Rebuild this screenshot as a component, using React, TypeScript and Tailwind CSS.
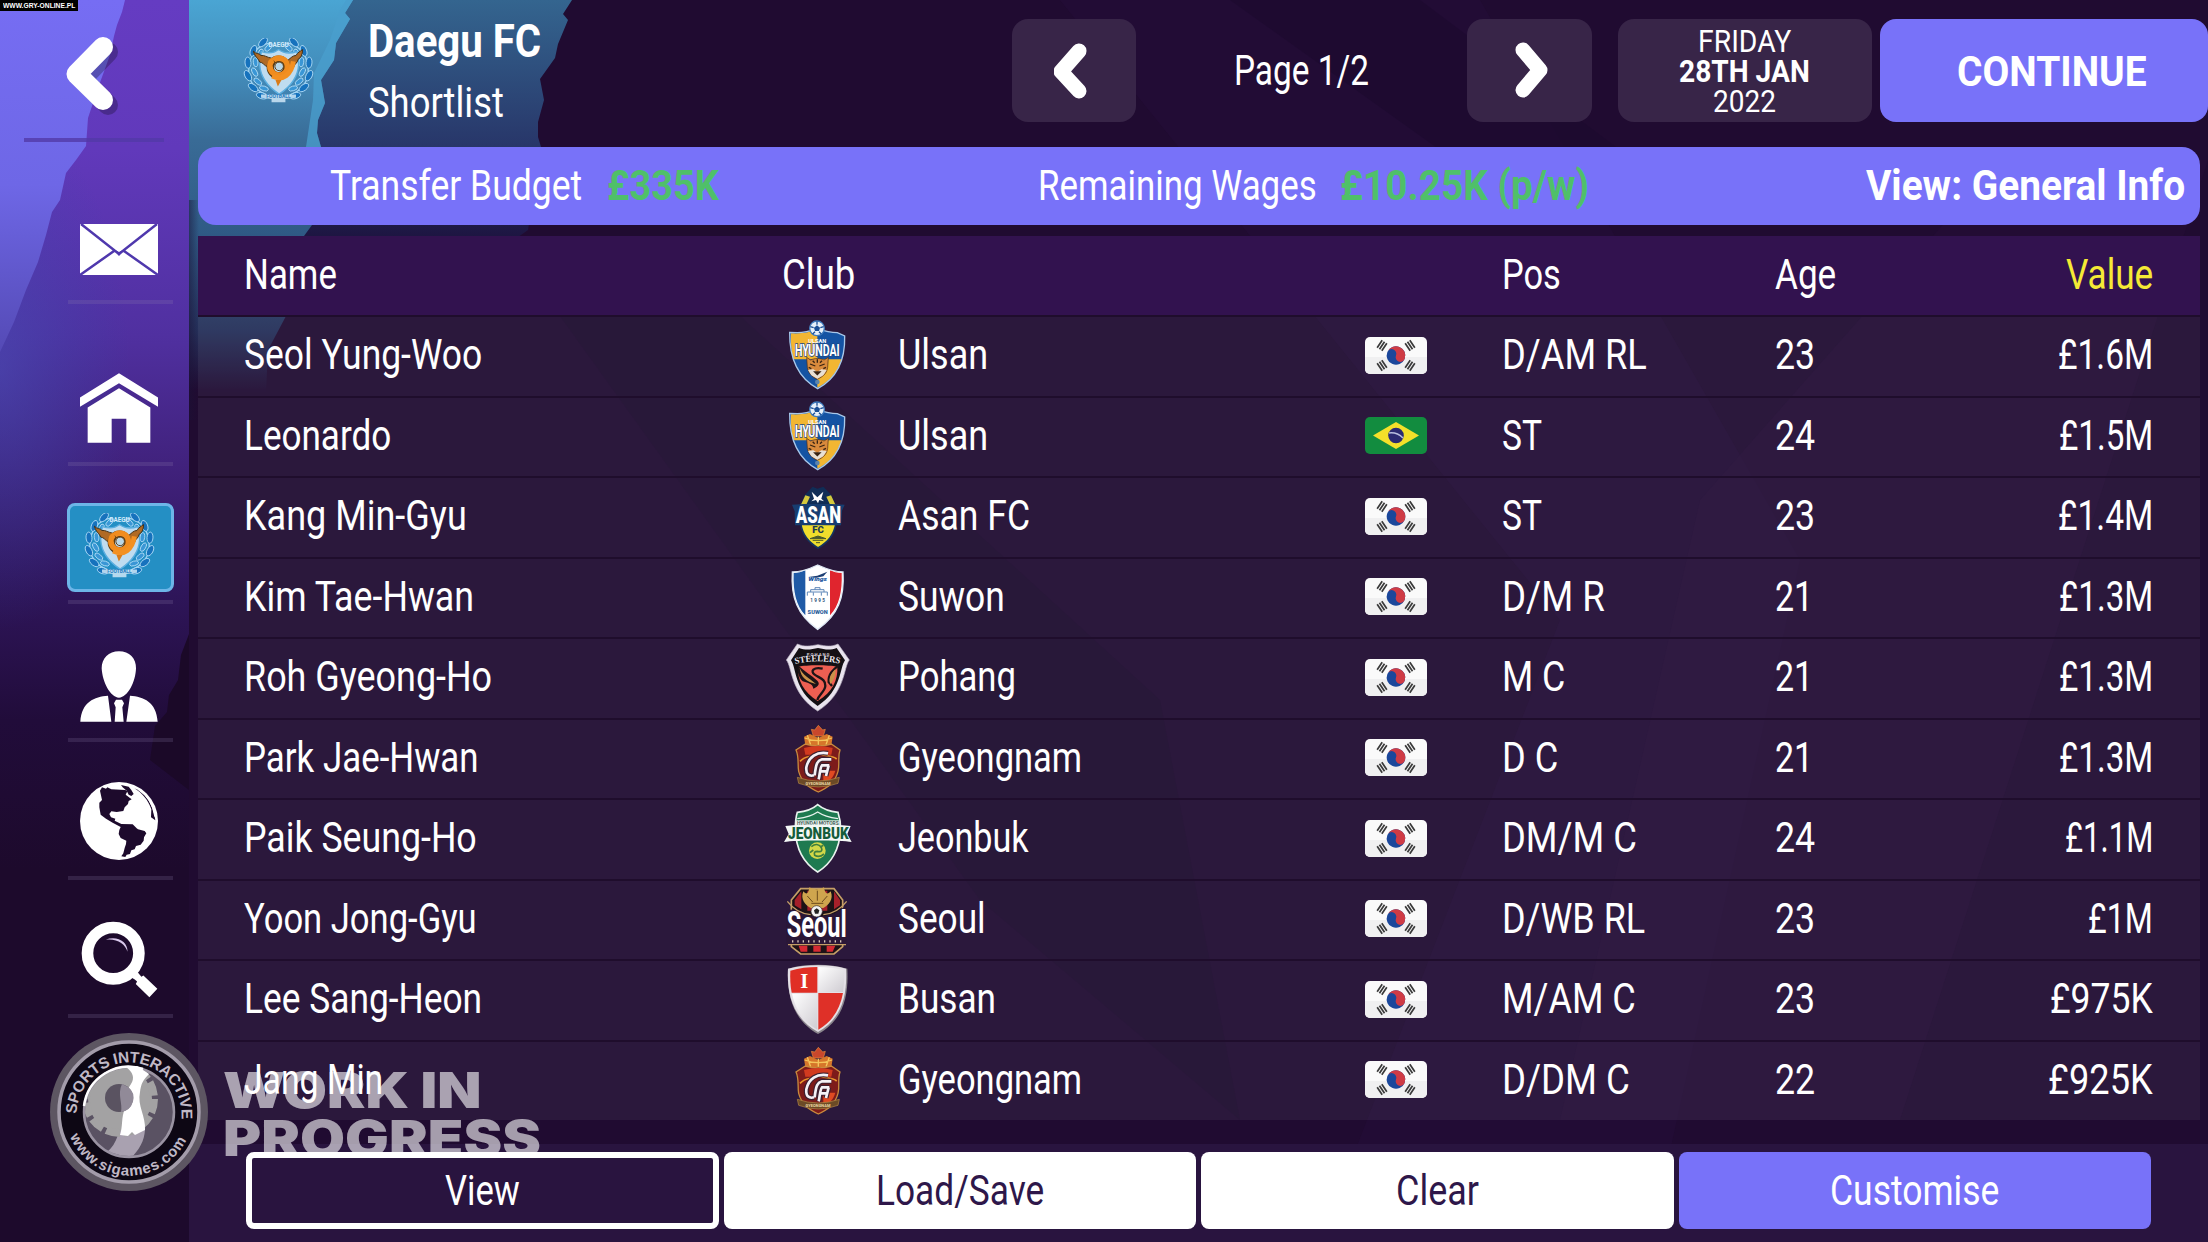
import { useLayoutEffect, useRef, useState } from "react";
import type { ReactNode } from "react";
import clsx from "clsx";

type Player = {
  name: [string, number];
  crest: keyof typeof crests;
  club: [string, number];
  flag: "kr" | "br";
  pos: [string, number];
  age: [string, number];
  value: [string, number];
};

// Squeezes a line of text to a given width, for the condensed look
const Fit = ({
  w,
  className,
  children,
}: {
  w: number;
  className?: string;
  children: ReactNode;
}) => {
  const ref = useRef<HTMLSpanElement>(null);
  const [scale, setScale] = useState(1);

  useLayoutEffect(() => {
    if (ref.current) setScale(w / ref.current.offsetWidth);
  }, [w, children]);

  return (
    <span className={clsx("inline-block whitespace-nowrap", className)} style={{ width: w }}>
      <span
        ref={ref}
        className="inline-block origin-left"
        style={{ transform: `scaleX(${scale})` }}
      >
        {children}
      </span>
    </span>
  );
};

const Backdrop = () => (
  <svg className="absolute inset-0" width="2208" height="1242" viewBox="0 0 2208 1242">
    <defs>
      <linearGradient id="side" x1="0" y1="0" x2="0" y2="1">
        <stop offset="0" stopColor="#653cc2" />
        <stop offset="0.12" stopColor="#6139bb" />
        <stop offset="0.27" stopColor="#5030a0" />
        <stop offset="0.38" stopColor="#40217b" />
        <stop offset="0.48" stopColor="#2e1559" />
        <stop offset="0.58" stopColor="#210c3a" />
        <stop offset="0.7" stopColor="#1d0a2c" />
        <stop offset="1" stopColor="#1d0a2c" />
      </linearGradient>
      <radialGradient id="sideFade">
        <stop offset="0" stopColor="#4652b8" stopOpacity="0.5" />
        <stop offset="1" stopColor="#3045a8" stopOpacity="0" />
      </radialGradient>
      <linearGradient id="sideFront" x1="0" y1="0" x2="0" y2="370" gradientUnits="userSpaceOnUse">
        <stop offset="0" stopColor="#766df3" />
        <stop offset="0.5" stopColor="#6e67e6" />
        <stop offset="1" stopColor="#5247b0" />
      </linearGradient>
      <linearGradient id="teal" x1="0" y1="0" x2="0" y2="390" gradientUnits="userSpaceOnUse">
        <stop offset="0" stopColor="#4aa5d3" />
        <stop offset="0.2" stopColor="#428ab8" />
        <stop offset="0.36" stopColor="#396b96" />
        <stop offset="0.6" stopColor="#2f5a85" />
        <stop offset="0.85" stopColor="#25305a" />
        <stop offset="1" stopColor="#200b32" />
      </linearGradient>
      <linearGradient id="slate" x1="0" y1="0" x2="0" y2="240" gradientUnits="userSpaceOnUse">
        <stop offset="0" stopColor="#34658f" />
        <stop offset="0.6" stopColor="#28376a" />
        <stop offset="1" stopColor="#1d1440" />
      </linearGradient>
      <linearGradient id="shade" x1="0" y1="0" x2="1" y2="0">
        <stop offset="0" stopColor="#1b1136" stopOpacity="0.5" />
        <stop offset="1" stopColor="#1b1136" stopOpacity="0" />
      </linearGradient>
    </defs>
    <rect width="2208" height="1242" fill="#200b31" />
    <polygon points="1060,0 1480,0 1800,560 1650,1242 1320,1242 1560,620" fill="#250d38" opacity="0.6" />
    <polygon points="1230,0 1420,0 1620,150 1440,150" fill="#1d0a2f" opacity="0.7" />
    <polygon points="560,316 740,316 1160,700 1240,1120 980,900" fill="#1b0b2a" opacity="0.35" />
    <polygon points="1700,500 2000,160 2208,160 1900,1120 1560,1120" fill="#250e38" opacity="0.5" />
    <polygon
      points="189,0 572,0 563,14 568,20 558,44 555,58 540,79 544,100 538,122 538,137 541,147 528,230 500,250 189,250"
      fill="url(#slate)"
    />
    <polygon
      points="189,0 353,0 345,13 350,19 336,43 334,60 321,80 325,103 318,120 317,133 321,147 312,225 304,236 286,316 268,350 266,392 189,392"
      fill="url(#teal)"
    />
    <polygon
      points="353,0 345,13 350,19 336,43 334,60 321,80 325,103 318,120 317,133 321,147 306,147 313,100 314,73 330,40 340,10 346,0"
      fill="#4a9fcd"
      opacity="0.75"
    />
    <rect x="189" y="200" width="10" height="220" fill="url(#shade)" />
    <rect width="189" height="1242" fill="url(#side)" />
    <ellipse cx="0" cy="370" rx="130" ry="260" fill="url(#sideFade)" />
    <polygon
      points="0,0 125,0 122,12 117,25 114,36 110,55 98,88 88,118 86,146 76,160 66,173 60,200 52,212 46,235 38,262 26,290 14,322 0,352"
      fill="url(#sideFront)"
    />
    <polygon points="189,634 181,655 178,680 169,695 167,712 155,726 150,760 189,790" fill="#1b0928" />
  </svg>
);

const DaeguCrest = () => (
  <svg width="73" height="66" viewBox="249 545 220 200">
    {[-1, 1].map((side) => (
      <g key={side} transform={`translate(359 640) scale(${side} 1)`}>
        <path
          d="M20-80C70-75 92-35 90 10C86 50 60 72 20 82"
          fill="none"
          stroke="#9fd4f5"
          strokeWidth="4"
        />
        {[-62, -38, -14, 10, 34, 56].map((a) => (
          <g key={a} transform={`rotate(${a}) translate(86 0) rotate(18)`} stroke="#b5dff8" strokeWidth="2.5">
            <ellipse cx="9" cy="0" rx="9" ry="17" fill="#1672bd" />
            <ellipse cx="-14" cy="0" rx="7" ry="14" fill="#3a96d5" />
          </g>
        ))}
      </g>
    ))}
    <path
      d="M359 580C375 592 398 592 415 586L420 625C418 665 392 695 361 715C330 695 304 665 302 625L307 586C324 592 344 592 359 580Z"
      fill="#bfdcf0"
      stroke="#5aaee0"
      strokeWidth="4"
    />
    <text x="359" y="573" textAnchor="middle" fontSize="19" className="fill-[#d6ecfa] font-['Roboto'] font-bold">
      DAEGU
    </text>
    <path d="M306 716H412V726L380 730V740H338V730L306 726Z" fill="#cfe6f6" opacity="0.85" />
    <text x="359" y="728" textAnchor="middle" fontSize="15" className="fill-[#2b80c2] font-['Roboto'] font-bold">
      FOOTBALL
    </text>
    <path
      d="M283 585C290 594 300 590 306 598C316 596 324 604 338 606L326 632C316 630 312 618 302 618C298 606 288 604 283 585ZM432 580C424 586 418 588 412 598C402 598 396 606 388 612L394 636L406 632C408 622 418 620 418 610C426 606 432 596 432 580Z"
      fill="#b06a24"
      stroke="#453116"
      strokeWidth="3"
    />
    <circle cx="359" cy="634" r="25" fill="none" stroke="#5a3a12" strokeWidth="22" />
    <path
      d="M344 612C360 600 386 608 386 632C386 654 362 664 344 652C328 640 330 616 344 612"
      fill="none"
      stroke="#f08c1e"
      strokeWidth="17"
    />
    <path
      d="M340 660C372 676 398 656 404 616"
      fill="none"
      stroke="#f39021"
      strokeWidth="15"
    />
    <circle cx="361" cy="631" r="13" fill="#b9d6e6" stroke="#5a3a12" strokeWidth="3" />
    <path d="M350 672L368 672L357 692Z" fill="#d97b18" />
  </svg>
);

const UlsanCrest = () => (
  <>
    <path
      d="M89 67L112 68C135 68 148 64 172 55C196 64 210 68 232 68L254 78C256 150 230 205 173 236C116 205 88 150 89 67Z"
      fill="#1453a3"
    />
    <path d="M93 70C130 72 150 66 172 58L172 148L99 148C94 125 92 100 93 70Z" fill="#f2b632" />
    <path d="M172 148L245 148C232 190 205 218 172 233Z" fill="#f2b632" />
    <path
      d="M89 67L112 68C135 68 148 64 172 55C196 64 210 68 232 68L254 78C256 150 230 205 173 236C116 205 88 150 89 67Z"
      fill="none"
      stroke="#a8c8ea"
      strokeWidth="4"
    />
    <circle cx="171" cy="55" r="22" fill="#e6f0fa" stroke="#3f7bbd" strokeWidth="4" />
    <path d="M171 46L180 53L177 63L165 63L162 53Z" fill="#1a4f96" />
    <path
      d="M171 34V44M151 50L161 53M158 72L165 65M184 72L177 65M191 50L181 53"
      stroke="#1a4f96"
      strokeWidth="4"
    />
    <text x="172" y="98" textAnchor="middle" fontSize="17" className="fill-white font-['Roboto'] font-bold">
      ULSAN
    </text>
    <text
      x="105"
      y="137"
      textLength="134"
      lengthAdjust="spacingAndGlyphs"
      fontSize="47"
      strokeWidth="5"
      paintOrder="stroke"
      className="fill-white stroke-[#1d4a87] font-['Roboto'] font-bold"
    >
      HYUNDAI
    </text>
    <path
      d="M140 142L152 150C165 144 180 144 192 150L205 142L203 172C200 192 188 200 172 208C156 200 146 192 142 172Z"
      fill="#d98a3c"
      stroke="#4a2b14"
      strokeWidth="2"
    />
    <path d="M144 180L160 178L172 186L184 178L200 180L190 196L172 206L154 196Z" fill="#e8e0d4" />
    <path
      d="M150 162L166 168M194 162L178 168M172 148V158M164 186H180L172 194ZM146 172L154 176M198 172L190 176M158 152L164 158M186 152L180 158"
      stroke="#3a2413"
      strokeWidth="4"
      fill="#3a2413"
    />
    <circle cx="172" cy="216" r="7" fill="#5b84ad" />
  </>
);

const AsanCrest = () => (
  <>
    <path d="M134 555L158 530L172 536L190 530L214 555L226 585L122 585Z" fill="#102d56" />
    <path
      d="M122 640H228C222 675 205 695 174 714C145 695 127 675 122 640Z"
      fill="#f0de2c"
      stroke="#143560"
      strokeWidth="5"
    />
    <path d="M136 556L150 560L138 586L122 586ZM213 556L199 560L211 586L227 586Z" fill="#d5c83c" />
    <path d="M155 545L172 562L190 545L184 566L192 574L178 570L174 580L168 570L154 574L162 566Z" fill="#fff" />
    <path d="M96 584L132 582H214L254 584L246 602L243 646H105L104 604Z" fill="#173d70" />
    <text
      x="107"
      y="640"
      textLength="136"
      lengthAdjust="spacingAndGlyphs"
      fontSize="71"
      className="fill-white font-['Roboto'] font-black"
    >
      ASAN
    </text>
    <text x="174" y="670" textAnchor="middle" fontSize="29" className="fill-[#1d3a52] font-['Roboto'] font-black">
      FC
    </text>
    <path d="M150 686L174 678L198 686ZM158 691H190M168 698H180" stroke="#4b5a2c" strokeWidth="3" fill="#4b5a2c" />
  </>
);

const SuwonCrest = () => (
  <>
    <path
      d="M97 785C125 785 150 775 173 764C198 775 222 785 249 785C254 860 235 915 173 957C112 915 92 860 97 785Z"
      fill="#fff"
    />
    <path d="M101 788C115 788 125 785 136 780V915C108 885 99 845 101 788Z" fill="#1f5aa6" />
    <path d="M245 788C231 788 221 785 210 780V915C238 885 247 845 245 788Z" fill="#e0252e" />
    <path
      d="M97 785C125 785 150 775 173 764C198 775 222 785 249 785C254 860 235 915 173 957C112 915 92 860 97 785Z"
      fill="none"
      stroke="#dfe9f5"
      strokeWidth="4"
    />
    <path d="M145 800L172 796L202 784L190 798L170 802Z" fill="#1c3e73" />
    <text
      x="145"
      y="812"
      textLength="56"
      lengthAdjust="spacingAndGlyphs"
      fontSize="18"
      className="fill-[#1b56a0] font-['Roboto'] font-black italic"
    >
      Wings
    </text>
    <path
      d="M142 856V845H202V856M152 845V838H192V845M165 838V832H180V838M160 856V846M184 856V846"
      stroke="#5d86b8"
      strokeWidth="3"
      fill="none"
    />
    <text x="175" y="874" textAnchor="middle" fontSize="14" className="fill-[#34557e] font-['Roboto'] font-bold tracking-[4px]">
      1995
    </text>
    <text x="173" y="912" textAnchor="middle" fontSize="17" className="fill-[#2f5f9c] font-['Roboto'] font-black">
      SUWON
    </text>
  </>
);

const PohangCrest = () => (
  <>
    <path
      d="M112 42C135 52 150 48 174 44C198 48 212 52 234 42L268 90C250 110 258 190 173 243C90 190 97 110 79 90Z"
      fill="#e9e4ee"
      stroke="#bdb5c4"
      strokeWidth="2"
    />
    <path
      d="M117 54C138 62 155 58 174 54C193 58 210 62 230 54L255 91C238 115 246 180 173 228C101 180 110 115 93 91Z"
      fill="#141014"
    />
    <path d="M114 110C140 104 205 104 232 110C234 150 218 185 173 213C130 185 112 150 114 110Z" fill="#ee5f52" />
    <path d="M114 106C132 124 152 134 172 152C184 164 168 172 160 176C158 160 140 158 128 154C116 142 110 124 114 106Z" fill="#1d1316" />
    <path
      d="M188 116C160 110 150 124 164 134C178 144 198 148 196 168C194 186 176 194 172 210M236 106C220 118 204 132 206 156L216 168"
      stroke="#1d1316"
      strokeWidth="7"
      fill="none"
    />
    <path
      d="M119 114C128 136 148 144 168 162C140 156 122 142 119 114ZM226 118C214 130 204 145 211 162C222 150 228 136 226 118Z"
      fill="#c99249"
    />
    <text x="176" y="79" textAnchor="middle" fontSize="13" className="fill-[#cfc9d2] font-['Roboto'] font-bold tracking-[3px]">
      POHANG
    </text>
    <path id="steel" d="M106 102Q174 86 242 102" fill="none" />
    <text fontSize="27" className="fill-[#eee9f0] font-['Liberation_Serif'] font-bold">
      <textPath href="#steel" textLength="134" lengthAdjust="spacingAndGlyphs">
        STEELERS
      </textPath>
    </text>
  </>
);

const GyeongnamCrest = () => (
  <>
    <path d="M175 284L188 298L196 296L190 316H160L154 296L164 298Z" fill="#c9472c" stroke="#e28a3a" strokeWidth="2" />
    <path d="M132 318L150 310L175 322L200 310L218 318L214 344H136Z" fill="#d6762a" />
    <path
      d="M134 322Q175 338 216 322M142 314L152 342M208 314L198 342M175 318V342"
      stroke="#f4c45a"
      strokeWidth="4"
      fill="none"
    />
    <path
      d="M136 340Q175 352 214 340L240 358C232 380 240 400 234 422C225 455 205 470 175 484C145 470 125 455 116 422C112 400 118 380 108 358Z"
      fill="#7d1b1a"
      stroke="#c9893d"
      strokeWidth="4"
    />
    <path d="M132 352Q175 340 218 352L214 372H136Z" fill="#d23a1f" />
    <path d="M120 392C140 370 150 384 175 368C200 380 215 372 230 385" stroke="#e9952c" strokeWidth="5" fill="none" />
    <path d="M190 420H226C220 442 205 455 190 458Z" fill="#e04a22" />
    <path
      d="M204 368C170 362 146 378 139 410C137 432 148 438 162 434M214 386H186C172 390 168 398 164 434M208 404H186C180 410 180 430 176 446M182 422H200M206 404L198 436"
      stroke="#3b2030"
      strokeWidth="15"
      fill="none"
    />
    <path
      d="M204 368C170 362 146 378 139 410C137 432 148 438 162 434M214 386H186C172 390 168 398 164 434M208 404H186C180 410 180 430 176 446M182 422H200M206 404L198 436"
      stroke="#f4f1f6"
      strokeWidth="8"
      fill="none"
    />
    <path d="M112 440Q175 462 238 440L234 458Q175 480 116 458Z" fill="#6b4a26" stroke="#b58a45" strokeWidth="2" />
    <text x="174" y="464" textAnchor="middle" fontSize="12" className="fill-[#f0dca8] font-['Roboto'] font-bold">
      GYEONGNAM
    </text>
  </>
);

const JeonbukCrest = () => (
  <>
    <path
      d="M173 524C192 540 212 545 234 547C240 565 242 580 242 600C238 660 215 700 173 726C132 700 108 660 106 600C106 580 106 565 112 547C135 545 155 540 173 524Z"
      fill="#1e7a50"
      stroke="#e9f3ee"
      strokeWidth="5"
    />
    <path
      d="M112 566C140 562 158 556 173 546C188 556 206 562 234 566"
      fill="none"
      stroke="#e9f3ee"
      strokeWidth="4"
    />
    <rect x="108" y="571" width="131" height="18" fill="#eef4f1" />
    <text
      x="111"
      y="585"
      textLength="125"
      lengthAdjust="spacingAndGlyphs"
      fontSize="15"
      className="fill-[#44605a] font-['Roboto'] font-bold"
    >
      HYUNDAI MOTORS
    </text>
    <path d="M72 636L86 612L76 588C140 582 208 582 272 588L262 612L275 636C240 630 108 630 72 636Z" fill="#f4f8f6" />
    <text
      x="84"
      y="627"
      textLength="182"
      lengthAdjust="spacingAndGlyphs"
      fontSize="51"
      className="fill-[#155c3b] font-['Roboto'] font-black"
    >
      JEONBUK
    </text>
    <circle cx="172" cy="662" r="25" fill="#d2d848" />
    <path
      d="M154 650Q172 636 184 652Q190 668 172 664Q160 664 164 676Q178 684 192 672M150 668L160 660M180 652L190 646"
      stroke="#3f7f3f"
      strokeWidth="5"
      fill="none"
    />
  </>
);

const SeoulCrest = () => (
  <>
    <path d="M122 54H222L248 88V228L222 250H122L94 228V88Z" fill="#1d1216" stroke="#c59f67" strokeWidth="5" />
    <path
      d="M104 88L124 62V116L104 104ZM142 60H160V120H142ZM184 60H202V120H184ZM222 62L240 88V104L222 116Z"
      fill="#a5202a"
    />
    <path
      d="M130 62C140 74 146 68 148 50C160 58 180 58 192 50C194 68 202 74 212 62C222 86 206 104 190 112H152C136 104 120 86 130 62Z"
      fill="#cfa54e"
    />
    <path d="M142 76L158 94M202 76L186 94M172 60V90M154 98H190" stroke="#6c4a1c" strokeWidth="3" />
    <path d="M80 118L112 116L150 136H192L224 128L260 104V220H80Z" fill="#2a1736" />
    <path d="M82 92Q110 128 152 132M260 92Q232 128 190 132" stroke="#c59f67" strokeWidth="4" fill="none" />
    <circle cx="170" cy="122" r="17" fill="#f4f4f4" stroke="#3a3030" strokeWidth="2" />
    <path d="M170 113L178 119L175 129H165L162 119Z" fill="#222" />
    <text
      x="80"
      y="200"
      textLength="180"
      lengthAdjust="spacingAndGlyphs"
      fontSize="108"
      className="fill-white font-['Roboto'] font-bold"
    >
      Seoul
    </text>
    <path d="M96 212H250" stroke="#d8c6b8" strokeWidth="7" strokeDasharray="4 12" />
    <path d="M84 222H258" stroke="#c59f67" strokeWidth="4" />
    <path d="M116 225H142V243H122ZM160 225H182V243H160ZM200 225H226L218 243H200Z" fill="#d52a33" />
  </>
);

const BusanCrest = () => (
  <>
    <defs>
      <linearGradient id="silver" x1="0" y1="0" x2="1" y2="1">
        <stop offset="0" stopColor="#fff" />
        <stop offset="1" stopColor="#cfccd2" />
      </linearGradient>
    </defs>
    <path
      d="M84 296C115 286 145 284 174 284C205 284 235 288 262 296C266 375 252 450 174 492C98 450 80 375 84 296Z"
      fill="#8b868d"
    />
    <path
      d="M84 296C115 288 145 286 174 286C203 286 232 288 258 296C262 372 248 445 174 486C100 445 80 375 84 296Z"
      fill="#e4e0e6"
    />
    <path d="M91 302C118 294 145 291 172 291V368H95C91 347 90 325 91 302Z" fill="#e02f25" />
    <path d="M175 291C203 291 228 294 252 300C253 325 252 347 249 366H175Z" fill="url(#silver)" />
    <path d="M96 371H172V479C130 456 106 418 96 371Z" fill="url(#silver)" />
    <path d="M175 369H249C240 418 216 456 175 479Z" fill="#df3028" />
    <text x="133" y="353" textAnchor="middle" fontSize="62" className="fill-white font-['Liberation_Serif'] font-bold">
      I
    </text>
  </>
);

// Every crest keeps its own drawing space, one table row high
const crests = {
  ulsan: { box: "66 15 216 240", art: <UlsanCrest /> },
  asan: { box: "66 498 216 240", art: <AsanCrest /> },
  suwon: { box: "66 740 216 240", art: <SuwonCrest /> },
  pohang: { box: "66 21 216 240", art: <PohangCrest /> },
  gyeongnam: { box: "66 262 216 240", art: <GyeongnamCrest /> },
  jeonbuk: { box: "66 504 216 240", art: <JeonbukCrest /> },
  seoul: { box: "66 25 216 240", art: <SeoulCrest /> },
  busan: { box: "66 267 216 240", art: <BusanCrest /> },
};

const Flag = ({ code }: { code: "kr" | "br" }) =>
  code === "br" ? (
    <svg width="62" height="37" viewBox="0 0 62 37" className="rounded-[5px]">
      <rect width="62" height="37" fill="#128c3f" />
      <polygon points="31,5 54,18.5 31,32 8,18.5" fill="#f3e02a" />
      <circle cx="31" cy="18.5" r="7.8" fill="#2b2a72" />
      <path d="M24 16Q32 15 38 21" stroke="#b9bfe0" strokeWidth="1.5" fill="none" />
    </svg>
  ) : (
    <svg width="62" height="37" viewBox="0 0 62 37" className="rounded-[5px]">
      <rect width="62" height="37" fill="#fafafa" />
      <rect y="20" width="62" height="17" fill="#f0f0f1" />
      <g transform="rotate(22 31 18.5)">
        <circle cx="31" cy="18.5" r="9.3" fill="#1b479b" />
        <path
          d="M21.7 18.5A9.3 9.3 0 0 1 40.3 18.5A4.65 4.65 0 0 1 31 18.5A4.65 4.65 0 0 0 21.7 18.5Z"
          fill="#cf3b45"
        />
      </g>
      {[
        [17, 8.5, -56],
        [45, 8.5, 56],
        [17, 28.5, 56],
        [45, 28.5, -56],
      ].map(([x, y, a]) => (
        <path
          key={`${x}-${y}`}
          transform={`translate(${x} ${y}) rotate(${a})`}
          d="M-4.5-2.8H4.5M-4.5 0H4.5M-4.5 2.8H4.5"
          stroke="#3a3a3a"
          strokeWidth="1.7"
        />
      ))}
    </svg>
  );

const players: Player[] = [
  { name: ["Seol Yung-Woo", 238], crest: "ulsan", club: ["Ulsan", 90], flag: "kr", pos: ["D/AM RL", 145], age: ["23", 40], value: ["£1.6M", 95] },
  { name: ["Leonardo", 147], crest: "ulsan", club: ["Ulsan", 90], flag: "br", pos: ["ST", 40], age: ["24", 40], value: ["£1.5M", 94] },
  { name: ["Kang Min-Gyu", 223], crest: "asan", club: ["Asan FC", 132], flag: "kr", pos: ["ST", 40], age: ["23", 40], value: ["£1.4M", 95] },
  { name: ["Kim Tae-Hwan", 230], crest: "suwon", club: ["Suwon", 107], flag: "kr", pos: ["D/M R", 103], age: ["21", 38], value: ["£1.3M", 94] },
  { name: ["Roh Gyeong-Ho", 248], crest: "pohang", club: ["Pohang", 118], flag: "kr", pos: ["M C", 63], age: ["21", 38], value: ["£1.3M", 94] },
  { name: ["Park Jae-Hwan", 235], crest: "gyeongnam", club: ["Gyeongnam", 184], flag: "kr", pos: ["D C", 56], age: ["21", 38], value: ["£1.3M", 94] },
  { name: ["Paik Seung-Ho", 233], crest: "jeonbuk", club: ["Jeonbuk", 131], flag: "kr", pos: ["DM/M C", 135], age: ["24", 40], value: ["£1.1M", 88] },
  { name: ["Yoon Jong-Gyu", 233], crest: "seoul", club: ["Seoul", 88], flag: "kr", pos: ["D/WB RL", 143], age: ["23", 40], value: ["£1M", 65] },
  { name: ["Lee Sang-Heon", 238], crest: "busan", club: ["Busan", 98], flag: "kr", pos: ["M/AM C", 134], age: ["23", 40], value: ["£975K", 103] },
  { name: ["Jang Min", 139], crest: "gyeongnam", club: ["Gyeongnam", 184], flag: "kr", pos: ["D/DM C", 128], age: ["22", 40], value: ["£925K", 105] },
];

const navIcons = [
  {
    id: "mail",
    className: "h-[162px] pr-[3px] pb-[25px]",
    icon: (
      <svg width="78" height="51" viewBox="0 0 78 51">
        <rect width="78" height="51" fill="#fff" />
        <path d="M1 0L39 30L77 0M0 51L34 27M78 51L44 27" fill="none" stroke="#4f38ad" strokeWidth="2.5" />
        <path d="M33 25L39 32L45 25L39 28Z" fill="#4f38ad" />
      </svg>
    ),
  },
  {
    id: "home",
    className: "h-[162px] pr-[3px] pb-[19px]",
    icon: (
      <svg width="78" height="70" viewBox="242 130 234 209" fill="#fff">
        <polygon points="359,130 476,203 476,231 359,160 242,231 242,203" />
        <polygon points="359,175 453,233 453,339 381,339 381,267 337,267 337,339 265,339 265,233" />
      </svg>
    ),
  },
  {
    id: "club",
    className: "h-[138px] pb-2",
    icon: (
      <span className="flex h-[89px] w-[107px] shrink-0 items-center justify-center rounded-lg border-3 border-[#6db5e8] bg-[#248fc4] pr-[3px] pb-1">
        <DaeguCrest />
      </span>
    ),
  },
  {
    id: "manager",
    className: "h-[138px] pr-[3px] pb-4",
    icon: (
      <svg width="78" height="71" viewBox="242 963 234 213" fill="#fff">
        <path d="M359 964C390 964 411 985 410 1015C409 1055 385 1103 359 1103C333 1103 309 1055 307 1015C307 985 328 964 359 964Z" />
        <path d="M326 1097C285 1100 247 1115 243 1175H336ZM392 1097C433 1100 471 1115 475 1175H381Z" />
        <polygon points="350,1109 368,1109 374,1120 369,1132 373,1175 346,1175 349,1132 344,1120" />
      </svg>
    ),
  },
  {
    id: "world",
    className: "h-[138px] pr-[3px] pb-4",
    icon: (
      <svg width="78" height="78" viewBox="242 186 234 234">
        <circle cx="359" cy="303" r="117" fill="#fff" />
        <g fill="#1d0a2c">
          <path d="M302 212L308 202L320 206L324 202L336 208L378 210L384 214L379 224L397 238L388 243L386 252L376 262L372 273L352 276L336 274L330 282L335 292L348 296L346 302L366 312L400 313L412 325L416 328L436 333L441 340L434 352L433 362L424 374L410 378L406 388L396 391L392 402L382 404L378 411L366 409L372 400L376 384L380 372L381 362L364 354L358 342L360 330L364 321L340 308L320 296L304 284L300 262V248L308 240Z" />
          <path d="M365 195L388 200L396 210L403 222L396 228L388 224L382 212L370 202Z" />
          <path d="M405 205C436 216 462 252 468 301L455 292L456 268C446 240 430 220 405 205Z" />
        </g>
        <path d="M418 209C445 226 462 256 467 290" stroke="#fff" strokeWidth="4" fill="none" />
      </svg>
    ),
  },
  {
    id: "search",
    className: "h-[138px] pr-[3px] pb-4",
    icon: (
      <svg width="77" height="77" viewBox="243 602 230 232" fill="#fff">
        <circle cx="339" cy="699" r="77.5" fill="none" stroke="#fff" strokeWidth="35" />
        <path d="M317 658C350 645 384 664 382 695C376 670 350 654 317 658Z" fill="#d9c8ec" />
        <polygon points="394,772 412,756 424,770 430,766 472,806 448,832 407,792 411,784 404,778" />
      </svg>
    ),
  },
];

const Sidebar = () => (
  <aside className="relative flex w-[189px] shrink-0 flex-col">
    <div className="ml-6 h-[142px] w-[140px] border-b-4 border-[#523aa8]/80 pt-[33px] pl-[37px]">
      <svg width="62" height="84" viewBox="0 0 62 84" fill="none" strokeWidth="20" strokeLinejoin="round" strokeLinecap="round">
        <path d="M47 19L21 46L47 72" stroke="#000" opacity="0.25" />
        <path d="M42 14L15.5 41L42 67" stroke="#fff" />
      </svg>
    </div>
    {navIcons.map(({ id, className, icon }) => (
      <div
        key={id}
        className={clsx("ml-[68px] flex w-[105px] items-end justify-center border-b-4 border-[#9080b0]/20", className)}
      >
        {icon}
      </div>
    ))}
  </aside>
);

const TopBar = () => (
  <header className="flex h-[147px] items-start pt-[19px]">
    <div className="mt-[19px] ml-[53px] w-[126px]">
      <DaeguCrest />
    </div>
    <div className="-mt-[5px] w-[645px] leading-[54px]">
      <h1>
        <Fit w={173} className="text-[46px] font-bold">
          Daegu FC
        </Fit>
      </h1>
      <p className="mt-1.5">
        <Fit w={136}>Shortlist</Fit>
      </p>
    </div>
    <button className="flex h-[103px] w-[125px] items-center justify-center rounded-2xl bg-[#382548]">
      <svg width="40" height="58" viewBox="0 0 40 58" fill="none" stroke="#fff" strokeWidth="15" strokeLinejoin="round" strokeLinecap="round">
        <path d="M25 9L7 29.5L25 49" />
      </svg>
    </button>
    <div className="flex h-[103px] w-[331px] items-center justify-center">
      <Fit w={135}>Page 1/2</Fit>
    </div>
    <button className="flex h-[103px] w-[126px] items-center justify-center rounded-2xl bg-[#382548]">
      <svg width="40" height="58" viewBox="0 0 40 58" fill="none" stroke="#fff" strokeWidth="15" strokeLinejoin="round" strokeLinecap="round">
        <path d="M13 8L30 28L13 48" />
      </svg>
    </button>
    <div className="ml-[26px] flex h-[103px] w-[254px] flex-col items-center justify-center rounded-2xl bg-[#382548] pr-0.5 text-[32px] leading-[30px]">
      <Fit w={93}>FRIDAY</Fit>
      <Fit w={131} className="font-bold">
        28TH JAN
      </Fit>
      <Fit w={63}>2022</Fit>
    </div>
    <button className="ml-2 flex h-[103px] w-[328px] shrink-0 items-center justify-center rounded-2xl bg-[#7872f9] pl-4">
      <Fit w={190} className="text-[43px] font-bold">
        CONTINUE
      </Fit>
    </button>
  </header>
);

const BudgetBar = () => (
  <div className="ml-[9px] flex h-[78px] w-[2002px] items-center rounded-[18px] bg-[#7872f9]">
    <Fit w={252} className="ml-[132px]">
      Transfer Budget
    </Fit>
    <Fit w={112} className="ml-[25px] font-bold text-[#4fc069]">
      £335K
    </Fit>
    <Fit w={279} className="ml-[319px]">
      Remaining Wages
    </Fit>
    <Fit w={249} className="ml-[23px] font-bold text-[#4fc069]">
      £10.25K (p/w)
    </Fit>
    <Fit w={319} className="mr-[15px] ml-auto font-bold">
      View: General Info
    </Fit>
  </div>
);

const columns = "grid grid-cols-[538px_116px_467px_137px_273px_1fr] items-center pr-[47px] pl-[46px] pb-0.5";

const PlayerTable = () => (
  <section className="mt-[11px] ml-[9px] w-[2002px]">
    <div className={clsx(columns, "h-[79px] bg-[#32124f]")}>
      <Fit w={93}>Name</Fit>
      <Fit w={73} className="col-span-3">
        Club
      </Fit>
      <Fit w={59}>Pos</Fit>
      <div className="flex justify-between">
        <Fit w={61}>Age</Fit>
        <Fit w={87} className="text-[#f5ea35]">
          Value
        </Fit>
      </div>
    </div>
    {players.map((p) => (
      <div key={p.name[0]} className={clsx(columns, "h-[80.5px] border-t-2 border-[#1f0d2c] bg-[#88889a]/11")}>
        <Fit w={p.name[1]}>{p.name[0]}</Fit>
        <svg width="72" height="80" viewBox={crests[p.crest].box} className="-my-2">
          {crests[p.crest].art}
        </svg>
        <Fit w={p.club[1]}>{p.club[0]}</Fit>
        <Flag code={p.flag} />
        <Fit w={p.pos[1]}>{p.pos[0]}</Fit>
        <div className="flex justify-between">
          <Fit w={p.age[1]}>{p.age[0]}</Fit>
          <Fit w={p.value[1]}>{p.value[0]}</Fit>
        </div>
      </div>
    ))}
  </section>
);

const Actions = () => (
  <footer className="mt-6 flex h-[98px] gap-[5px] bg-[#29143f] pt-2 pl-[57px] *:flex *:h-[77px] *:w-[472.5px] *:items-center *:justify-center *:rounded-lg">
    <button className="border-[6px] border-white">
      <Fit w={75}>View</Fit>
    </button>
    <button className="bg-white text-[#2e174a]">
      <Fit w={168}>Load/Save</Fit>
    </button>
    <button className="bg-white text-[#2e174a]">
      <Fit w={83}>Clear</Fit>
    </button>
    <button className="bg-[#7872f9]">
      <Fit w={169}>Customise</Fit>
    </button>
  </footer>
);

const StudioBadge = () => (
  <svg width="160" height="160" viewBox="-80 -80 160 160">
    <defs>
      <path id="arcTop" d="M-52.5 3A52.5 52.5 0 1 1 52.5 3" />
      <path id="arcBottom" d="M-62 15A63.8 63.8 0 0 0 62 15" />
      <clipPath id="disc">
        <circle r="44" />
      </clipPath>
    </defs>
    <circle r="79" fill="#5d5662" />
    <circle r="70" fill="#0d0714" stroke="#a39caa" strokeWidth="3.5" />
    <circle r="45" fill="#5a5263" stroke="#9a93a2" strokeWidth="2.5" />
    <path
      clipPath="url(#disc)"
      d="M-8 0C-8 18 -12 32 -22 40L2 46C14 34 17 24 16 8Z"
      fill="#a9a1b0"
    />
    <circle cx="-9" cy="-13" r="32" fill="#a3a2a3" clipPath="url(#disc)" />
    <circle
      cx="-9"
      cy="-13"
      r="34"
      fill="none"
      stroke="#a3a2a3"
      strokeWidth="8"
      strokeDasharray="14 3.8"
      clipPath="url(#disc)"
    />
    <path
      d="M-3-45C4-40 6-34 2-28C-4-20 -2-12 -4-4C-8 6 -6 14 -9 23L-1 24L3 20L6 23L16 18C17 4 8-6 11-20C12-28 14-32 20-38L8-46Z"
      fill="#fff"
    />
    <path d="M-45-6A45 45 0 0 1 14-43" fill="none" stroke="#fff" strokeWidth="2.5" />
    <circle cx="-10" cy="-14" r="14" fill="#5a5361" />
    <path d="M-7-28C-12-18 -6-8 -8 0A14 14 0 0 0 -1-25Z" fill="#918a98" />
    <text fontSize="15.5" className="fill-[#c0b9c6] font-['Liberation_Sans'] font-bold">
      <textPath href="#arcTop" startOffset="1" textLength="168" lengthAdjust="spacing">
        SPORTS INTERACTIVE
      </textPath>
    </text>
    <text fontSize="15" className="fill-[#c0b9c6] font-['Liberation_Sans'] font-bold">
      <textPath href="#arcBottom" startOffset="10" textLength="146" lengthAdjust="spacing">
        www.sigames.com
      </textPath>
    </text>
  </svg>
);

const WorkInProgress = () => (
  <div className="absolute top-[1032px] left-[49px] flex">
    <StudioBadge />
    <p className="mt-[35px] ml-[14px] flex flex-col font-['Inter'] text-[49px] leading-[48px] font-black text-white/60">
      <Fit w={258}>WORK IN</Fit>
      <Fit w={318}>PROGRESS</Fit>
    </p>
  </div>
);

export default function App() {
  return (
    <div className="relative flex h-[1242px] w-[2208px] overflow-hidden bg-[#200b32] font-['Roboto',sans-serif] text-[42px] leading-[50px] text-white">
      <Backdrop />
      <Sidebar />
      <main className="relative w-[2019px] shrink-0">
        <TopBar />
        <BudgetBar />
        <PlayerTable />
        <Actions />
      </main>
      <WorkInProgress />
      <div className="absolute top-0 left-0 flex h-[11px] w-[78px] items-center bg-black pl-[3px] font-['Liberation_Sans'] text-[8px] leading-[11px] font-bold">
        <Fit w={72}>WWW.GRY-ONLINE.PL</Fit>
      </div>
    </div>
  );
}
